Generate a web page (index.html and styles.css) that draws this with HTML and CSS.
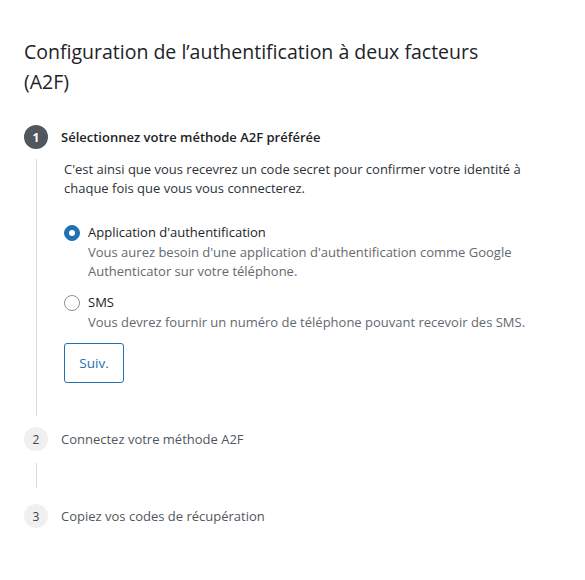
FILE: index.html
```html
<!DOCTYPE html>
<html lang="fr">
<head>
<meta charset="utf-8">
<link rel="stylesheet" href="styles.css">
</head>
<body>
<div class="wrap">
  <h1 class="title">Configuration de l’authentification à deux facteurs (A2F)</h1>
  <ol class="steps">
    <li class="step active">
      <div class="step-head"><span class="num">1</span><span class="label">Sélectionnez votre méthode A2F préférée</span></div>
      <div class="step-body">
        <p class="intro">C'est ainsi que vous recevrez un code secret pour confirmer votre identité à chaque fois que vous vous connecterez.</p>
        <div class="option">
          <span class="radio checked"></span>
          <div class="opt-text">
            <div class="opt-label">Application d'authentification</div>
            <div class="opt-desc">Vous aurez besoin d'une application d'authentification comme Google Authenticator sur votre téléphone.</div>
          </div>
        </div>
        <div class="option">
          <span class="radio"></span>
          <div class="opt-text">
            <div class="opt-label">SMS</div>
            <div class="opt-desc">Vous devrez fournir un numéro de téléphone pouvant recevoir des SMS.</div>
          </div>
        </div>
        <button class="btn">Suiv.</button>
      </div>
    </li>
    <li class="step">
      <div class="step-head"><span class="num">2</span><span class="label">Connectez votre méthode A2F</span></div>
      <div class="step-body short"></div>
    </li>
    <li class="step">
      <div class="step-head"><span class="num">3</span><span class="label">Copiez vos codes de récupération</span></div>
    </li>
  </ol>
</div>
</body>
</html>
```
FILE: styles.css
```css
html, body { margin: 0; padding: 0; background: #fff; }
body { font-family: "Open Sans", "Noto Sans", sans-serif; color: #1d2327; }
.wrap { padding: 37px 24px 0 24px; }
.title { margin: 0; font-size: 19.5px; font-weight: 500; line-height: 30px; color: #1d2327; max-width: 470px; }
.steps { list-style: none; margin: 28px 0 0 0; padding: 0; }
.step-head { display: flex; align-items: center; height: 24px; }
.num { width: 24px; height: 24px; border-radius: 50%; background: #f0f0f1; color: #3c434a; font-size: 12px; display: flex; align-items: center; justify-content: center; flex: none; }
.active .num { background: #50575e; color: #fff; font-weight: 700; }
.label { margin-left: 13px; font-size: 13px; color: #50575e; }
.active .label { font-weight: 600; color: #1d2327; }
.step-body { margin: 10px 0 11px 12px; border-left: 1px solid #dcdcde; padding: 0 0 33px 27px; }
.step-body.short { height: 25px; padding: 0; margin: 12px 0 16px 12px; }
.intro { margin: 0; font-size: 13px; line-height: 19px; color: #2c3338; max-width: 480px; padding-top: 1px; }
.option { display: flex; margin-top: 25px; }
.option + .option { margin-top: 12px; }
.radio { width: 14px; height: 14px; border: 1px solid #8c8f94; border-radius: 50%; flex: none; margin-top: 2px; box-sizing: content-box; display: flex; align-items: center; justify-content: center; }
.radio.checked { background: #2271b1; border-color: #2271b1; }
.radio.checked::after { content: ""; width: 6px; height: 6px; border-radius: 50%; background: #fff; }
.opt-text { margin-left: 8px; }
.opt-label { font-size: 13px; line-height: 19px; color: #1d2327; }
.opt-desc { font-size: 13px; line-height: 19px; color: #646970; margin-top: 1px; }
.btn { margin-top: 11px; font-family: inherit; font-size: 13.5px; color: #2271b1; background: #fff; border: 1px solid #2271b1; border-radius: 3px; width: 60px; height: 40px; padding: 0; }
```
